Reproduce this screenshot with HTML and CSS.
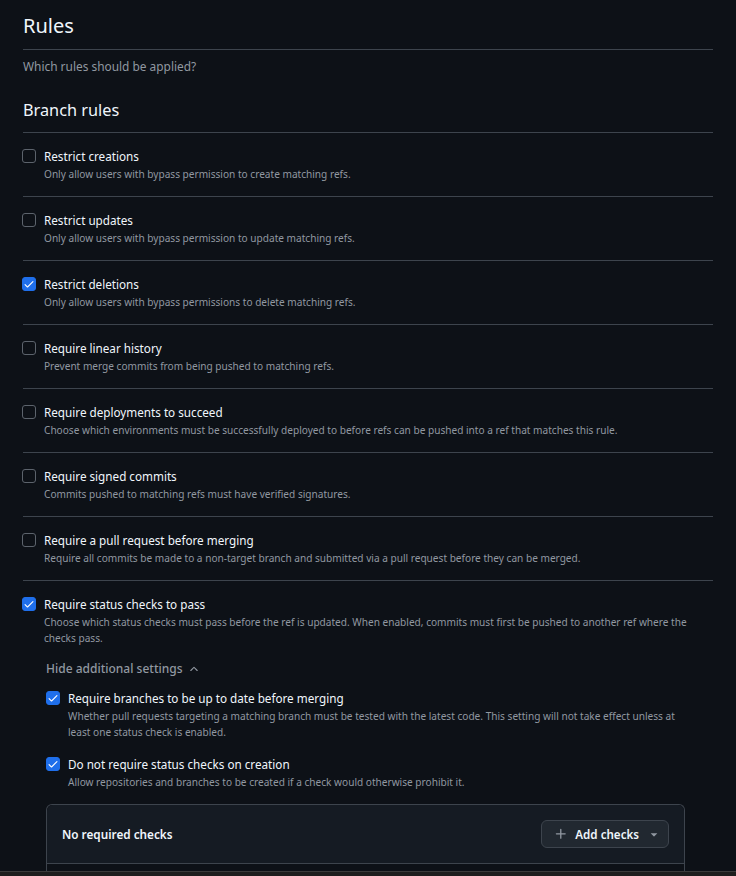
FILE: index.html
```html
<!DOCTYPE html>
<html>
<head>
<meta charset="utf-8">
<link rel="stylesheet" href="styles.css">
</head>
<body>
<div class="page">
  <h1 class="title">Rules</h1>
  <p class="subtitle">Which rules should be applied?</p>
  <h2 class="section">Branch rules</h2>

  <div class="rule">
    <span class="cb"></span>
    <div class="text">
      <div class="label">Restrict creations</div>
      <div class="desc">Only allow users with bypass permission to create matching refs.</div>
    </div>
  </div>
  <div class="rule">
    <span class="cb"></span>
    <div class="text">
      <div class="label">Restrict updates</div>
      <div class="desc">Only allow users with bypass permission to update matching refs.</div>
    </div>
  </div>
  <div class="rule">
    <span class="cb on"><svg viewBox="0 0 16 16" width="12" height="12"><path fill="#fff" d="M13.78 4.22a.75.75 0 0 1 0 1.06l-7.25 7.25a.75.75 0 0 1-1.06 0L2.22 9.28a.751.751 0 0 1 .018-1.042.751.751 0 0 1 1.042-.018L6 10.94l6.72-6.72a.75.75 0 0 1 1.06 0Z"/></svg></span>
    <div class="text">
      <div class="label">Restrict deletions</div>
      <div class="desc">Only allow users with bypass permissions to delete matching refs.</div>
    </div>
  </div>
  <div class="rule">
    <span class="cb"></span>
    <div class="text">
      <div class="label">Require linear history</div>
      <div class="desc">Prevent merge commits from being pushed to matching refs.</div>
    </div>
  </div>
  <div class="rule">
    <span class="cb"></span>
    <div class="text">
      <div class="label">Require deployments to succeed</div>
      <div class="desc">Choose which environments must be successfully deployed to before refs can be pushed into a ref that matches this rule.</div>
    </div>
  </div>
  <div class="rule">
    <span class="cb"></span>
    <div class="text">
      <div class="label">Require signed commits</div>
      <div class="desc">Commits pushed to matching refs must have verified signatures.</div>
    </div>
  </div>
  <div class="rule">
    <span class="cb"></span>
    <div class="text">
      <div class="label">Require a pull request before merging</div>
      <div class="desc">Require all commits be made to a non-target branch and submitted via a pull request before they can be merged.</div>
    </div>
  </div>
  <div class="rule last">
    <span class="cb on"><svg viewBox="0 0 16 16" width="12" height="12"><path fill="#fff" d="M13.78 4.22a.75.75 0 0 1 0 1.06l-7.25 7.25a.75.75 0 0 1-1.06 0L2.22 9.28a.751.751 0 0 1 .018-1.042.751.751 0 0 1 1.042-.018L6 10.94l6.72-6.72a.75.75 0 0 1 1.06 0Z"/></svg></span>
    <div class="text">
      <div class="label">Require status checks to pass</div>
      <div class="desc">Choose which status checks must pass before the ref is updated. When enabled, commits must first be pushed to another ref where the checks pass.</div>
    </div>
  </div>

  <div class="nested">
    <div class="toggle">Hide additional settings <svg viewBox="0 0 16 16" width="12" height="12"><path fill="#9198a1" d="M3.22 10.53a.749.749 0 0 1 0-1.06l4.25-4.25a.749.749 0 0 1 1.06 0l4.25 4.25a.749.749 0 0 1-1.06 1.06L8 6.811 4.28 10.53a.749.749 0 0 1-1.06 0Z"/></svg></div>

    <div class="sub">
      <span class="cb on"><svg viewBox="0 0 16 16" width="12" height="12"><path fill="#fff" d="M13.78 4.22a.75.75 0 0 1 0 1.06l-7.25 7.25a.75.75 0 0 1-1.06 0L2.22 9.28a.751.751 0 0 1 .018-1.042.751.751 0 0 1 1.042-.018L6 10.94l6.72-6.72a.75.75 0 0 1 1.06 0Z"/></svg></span>
      <div class="text">
        <div class="label">Require branches to be up to date before merging</div>
        <div class="desc">Whether pull requests targeting a matching branch must be tested with the latest code. This setting will not take effect unless at least one status check is enabled.</div>
      </div>
    </div>
    <div class="sub">
      <span class="cb on"><svg viewBox="0 0 16 16" width="12" height="12"><path fill="#fff" d="M13.78 4.22a.75.75 0 0 1 0 1.06l-7.25 7.25a.75.75 0 0 1-1.06 0L2.22 9.28a.751.751 0 0 1 .018-1.042.751.751 0 0 1 1.042-.018L6 10.94l6.72-6.72a.75.75 0 0 1 1.06 0Z"/></svg></span>
      <div class="text">
        <div class="label">Do not require status checks on creation</div>
        <div class="desc">Allow repositories and branches to be created if a check would otherwise prohibit it.</div>
      </div>
    </div>

    <div class="box">
      <div class="box-head">
        <span class="box-title">No required checks</span>
        <button class="btn">
          <svg class="plus" viewBox="0 0 16 16" width="14" height="14"><path fill="#9198a1" d="M7.75 2a.75.75 0 0 1 .75.75V7h4.25a.75.75 0 0 1 0 1.5H8.5v4.25a.75.75 0 0 1-1.5 0V8.5H2.75a.75.75 0 0 1 0-1.5H7V2.75A.75.75 0 0 1 7.75 2Z"/></svg>
          <span class="btn-label">Add checks</span>
          <svg class="caret" viewBox="0 0 16 16" width="14" height="14"><path fill="#9198a1" d="m4.427 7.427 3.396 3.396a.25.25 0 0 0 .354 0l3.396-3.396A.25.25 0 0 0 11.396 7H4.604a.25.25 0 0 0-.177.427Z"/></svg>
        </button>
      </div>
      <div class="box-body"></div>
    </div>
  </div>
</div>
<div class="winbar"></div>
</body>
</html>
```
FILE: styles.css
```css
html, body {
  margin: 0;
  padding: 0;
  background: #0d1117;
  overflow: hidden;
}
body {
  font-family: "Noto Sans", "Segoe UI", sans-serif;
  color: #f0f6fc;
  height: 876px;
}
.page {
  width: 690px;
  padding-left: 23px;
}
.title {
  margin: 0;
  padding: 8px 0 5px;
  font-size: 20px;
  line-height: 36px;
  font-weight: 400;
  border-bottom: 1px solid #3d444d;
}
.subtitle {
  margin: 6px 0 0;
  font-size: 11.9px;
  line-height: 20px;
  color: #9198a1;
}
.section {
  margin: 19px 0 0;
  padding-bottom: 7px;
  font-size: 16.3px;
  line-height: 30px;
  font-weight: 400;
  border-bottom: 1px solid #3d444d;
}
.rule {
  display: flex;
  gap: 8px;
  padding: 13px 0 14px;
  border-bottom: 1px solid #3d444d;
}
.rule.last {
  border-bottom: none;
  padding-bottom: 0;
}
.cb {
  flex: none;
  box-sizing: border-box;
  width: 14px;
  height: 14px;
  margin: 3px 0 0 -1px;
  border: 1px solid #5c636c;
  border-radius: 3px;
  display: flex;
  align-items: center;
  justify-content: center;
}
.cb.on {
  background: #1f6feb;
  border-color: #1f6feb;
}
.text {
  flex: 1;
  min-width: 0;
}
.label {
  font-size: 11.7px;
  line-height: 20px;
}
.desc {
  font-size: 10.1px;
  line-height: 16px;
  color: #9198a1;
}
.nested {
  margin: 13px 28px 0 23px;
}
.toggle {
  font-size: 12px;
  line-height: 20px;
  color: #9198a1;
  font-weight: 500;
  display: flex;
  align-items: center;
  gap: 5px;
}
.sub {
  display: flex;
  gap: 8px;
  margin-top: 9px;
}
.sub .cb {
  margin-left: 0;
}
.sub + .sub {
  margin-top: 14px;
}
.box {
  margin-top: 14px;
  border: 1px solid #3d444d;
  border-radius: 6px 6px 0 0;
  border-bottom: none;
}
.box-head {
  display: flex;
  align-items: center;
  justify-content: space-between;
  padding: 15px 15px 15px 15px;
  background: #151b23;
  border-radius: 6px 6px 0 0;
  border-bottom: 1px solid #3d444d;
}
.box-title {
  font-size: 11.75px;
  font-weight: 600;
}
.btn {
  display: flex;
  align-items: center;
  height: 28px;
  box-sizing: border-box;
  padding: 0 7px 0 12px;
  background: #212830;
  border: 1px solid #3d444d;
  border-radius: 6px;
  color: #f0f6fc;
  font-family: inherit;
  font-size: 11.6px;
  font-weight: 600;
}
.btn-label {
  margin: 0 8px 0 7px;
}
.box-body {
  height: 60px;
  background: #0d1117;
}
.winbar {
  position: fixed;
  left: 0;
  right: 0;
  bottom: 0;
  height: 4px;
  background: #1e1e1e;
  border-top: 1px solid #3b3b3b;
}
```
